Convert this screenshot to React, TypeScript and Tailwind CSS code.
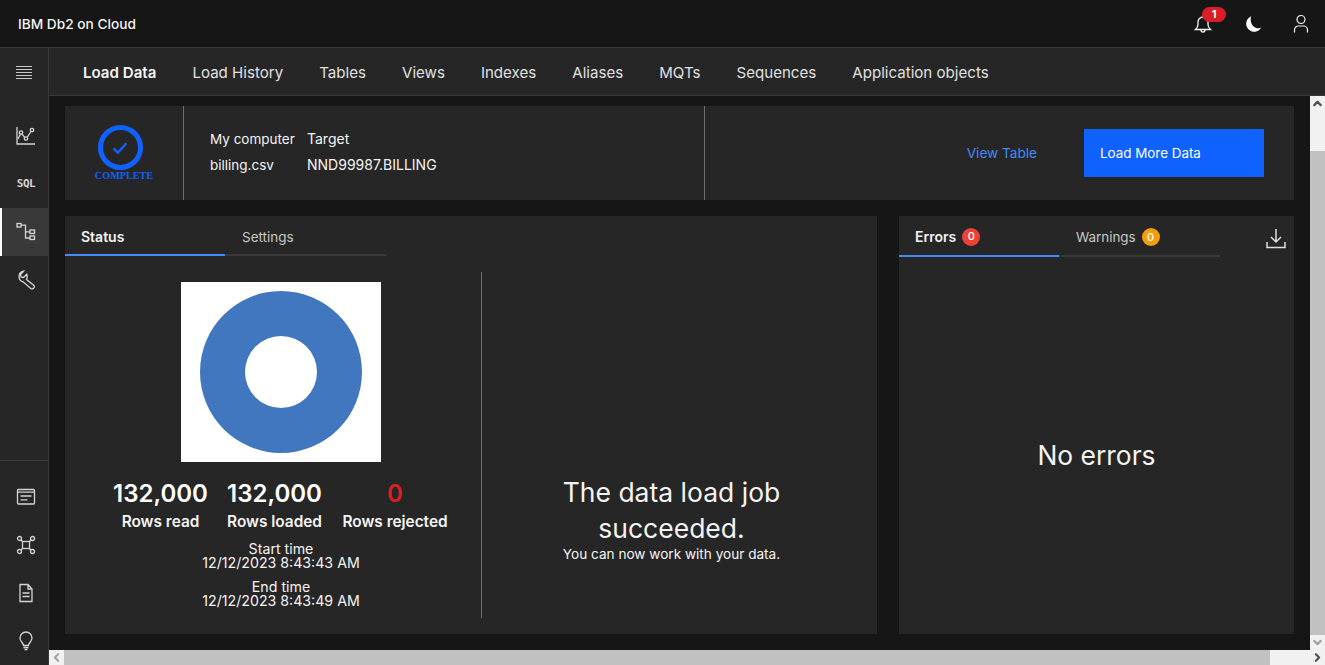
import React from 'react';
import { ChevronUp, ChevronDown, ChevronLeft, ChevronRight } from 'lucide-react';

const font = "font-['Inter','Liberation_Sans',sans-serif]";

const tabs = ['Load Data', 'Load History', 'Tables', 'Views', 'Indexes', 'Aliases', 'MQTs', 'Sequences', 'Application objects'];

const Svg = ({ children, w = 20 }: { children: React.ReactNode; w?: number }) => (
  <svg width={w} height={w} viewBox="0 0 20 20" fill="none" stroke="currentColor" strokeWidth="1.3">
    {children}
  </svg>
);

const ChartIcon = () => (
  <Svg>
    <path d="M1 1v17h18" />
    <path d="M2 13l3-6 5 6 6-9" />
    <circle cx="5" cy="6.5" r="1.7" fill="#262626" />
    <circle cx="10" cy="12.5" r="1.7" fill="#262626" />
    <circle cx="16" cy="4" r="1.7" fill="#262626" />
  </Svg>
);

const FlowIcon = () => (
  <Svg>
    <rect x="1" y="1.5" width="4" height="3.5" />
    <rect x="14" y="8" width="4.5" height="3.5" />
    <rect x="14" y="14" width="4.5" height="3.5" />
    <path d="M5 3.2H9.5V16H14M9.5 9.8H14" />
  </Svg>
);

const WrenchIcon = () => (
  <Svg>
    <path d="M7.5 1.2L4.5 4.5 5 7l2.500.5 3.300-3.300c.6 1.900.4 3.800-.3 5.300l7.500 6a2.300 2.300 0 0 1-3.300 3L7.500 12A5.500 5.500 0 0 1 7.500 1.200z" />
  </Svg>
);

const PanelIcon = () => (
  <Svg>
    <rect x="1.5" y="2.5" width="17" height="14.5" rx="1" />
    <path d="M1.5 5.2h17M4.5 9h11M4.5 12.8h7" />
  </Svg>
);

const NetworkIcon = () => (
  <Svg>
    <rect x="6.5" y="6.5" width="7" height="7" />
    <circle cx="3.5" cy="3.5" r="2" />
    <circle cx="16.5" cy="3.5" r="2" />
    <circle cx="3.5" cy="16.5" r="2" />
    <circle cx="16.5" cy="16.5" r="2" />
    <path d="M5 5l1.500 1.500M15 5l-1.500 1.500M5 15l1.500-1.500M15 15l-1.500-1.500" />
  </Svg>
);

const DocIcon = () => (
  <Svg>
    <path d="M4 1.5h8l4 4.500v12.500H4zM12 1.500V6h4M6.500 10h7M6.500 13.500h7" />
  </Svg>
);

const BulbIcon = () => (
  <Svg>
    <path d="M7.500 14.500c0-2.500-3.500-3.800-3.500-7.500a6 6 0 0 1 12 0c0 3.700-3.500 5-3.500 7.500z" />
    <path d="M7.500 16.500h5M8.500 18.500h3" />
  </Svg>
);

const SideButton = ({ children, active }: { children: React.ReactNode; active?: boolean }) => (
  <div className={`h-12 flex items-center justify-center text-[#d4d4d4] border-l-2 ${active ? 'bg-[#393939] border-white' : 'border-transparent'}`}>
    <div className="ml-0.5 flex items-center justify-center">{children}</div>
  </div>
);

const Stat = ({ value, label, red, width }: { value: string; label: string; red?: boolean; width: string }) => (
  <div className={`flex flex-col items-center shrink-0 ${width}`}>
    <div className={`text-[24px] leading-7 font-semibold whitespace-nowrap ${red ? 'text-[#da1e28]' : 'text-white'}`}>{value}</div>
    <div className="text-[15.4px] leading-5 font-semibold text-[#f4f4f4] mt-1 whitespace-nowrap">{label}</div>
  </div>
);

const Badge = ({ color, children }: { color: string; children: React.ReactNode }) => (
  <span className={`w-[18px] h-[18px] rounded-full text-white text-[11px] font-medium flex items-center justify-center ${color}`}>{children}</span>
);

export default function App() {
  return (
    <div className={`w-[1325px] h-[665px] overflow-hidden flex flex-col bg-[#161616] text-[#f4f4f4] ${font}`}>
      {/* Header */}
      <header className="h-[48px] shrink-0 bg-[#161616] border-b border-[#393939] flex items-center pl-[18px] relative">
        <span className="text-[13.7px] font-medium text-[#f4f4f4] mt-[1px]">IBM Db2 on Cloud</span>
        <div className="ml-auto flex items-center">
          <div className="relative w-5 h-5 mr-[30px] text-[#f4f4f4]">
            <svg width="20" height="20" viewBox="0 0 20 20" fill="none" stroke="currentColor" strokeWidth="1.3">
              <path d="M2.500 15.500c1.500-1.300 2.500-2.500 2.500-5V8a5 5 0 0 1 10 0v2.500c0 2.500 1 3.700 2.500 5zM8 16c0 2.700 4 2.700 4 0" />
            </svg>
            <span className="absolute -top-[7px] left-[9px] w-6 h-[15px] rounded-full bg-[#da1e28] text-white text-[11px] font-bold flex items-center justify-center">1</span>
          </div>
          <svg className="mr-[28px]" width="20" height="20" viewBox="0 0 20 20">
            <path fill="#fff" d="M8.200 2.300A8 8 0 1 0 18.200 13.600C13 16 5.700 10.800 8.200 2.300z" />
          </svg>
          <svg className="mr-[14px]" width="20" height="20" viewBox="0 0 20 20" fill="none" stroke="#f4f4f4" strokeWidth="1.2">
            <circle cx="10" cy="5.500" r="4" />
            <path d="M3.500 18.500v-2.500a4 4 0 0 1 4-4h5a4 4 0 0 1 4 4v2.500" />
          </svg>
        </div>
      </header>

      <div className="flex-1 flex min-h-0">
        {/* Sidebar */}
        <aside className="w-[49px] shrink-0 bg-[#262626] border-r border-[#393939] flex flex-col">
          <div className="h-[48px] flex items-center justify-center">
            <svg width="16" height="14" viewBox="0 0 16 14" stroke="#c6c6c6" strokeWidth="1">
              <path d="M0 1.500h16M0 4.500h16M0 7.500h16M0 10.500h16M0 13.500h16" />
            </svg>
          </div>
          <div className="mt-4 flex flex-col">
            <SideButton><ChartIcon /></SideButton>
            <SideButton>
              <span className="text-[11px] font-bold font-['DejaVu_Sans_Mono',monospace] tracking-[-0.5px] text-[#d4d4d4] mt-[1px]">SQL</span>
            </SideButton>
            <SideButton active><FlowIcon /></SideButton>
            <SideButton><WrenchIcon /></SideButton>
          </div>
          <div className="mt-auto border-t border-[#393939] pt-3 flex flex-col">
            <SideButton><PanelIcon /></SideButton>
            <SideButton><NetworkIcon /></SideButton>
            <SideButton><DocIcon /></SideButton>
            <SideButton><BulbIcon /></SideButton>
          </div>
        </aside>

        <div className="flex-1 flex flex-col min-w-0">
          {/* Sub navigation */}
          <nav className="h-[48px] shrink-0 bg-[#262626] border-b border-[#393939] flex items-center pl-[34px] pt-[3px] gap-[36px] text-[15.1px]">
            {tabs.map((t, i) => (
              <span key={t} className={i === 0 ? 'font-semibold text-[#f4f4f4]' : 'text-[#e0e0e0]'}>{t}</span>
            ))}
          </nav>

          <div className="flex-1 flex flex-col min-h-0">
            <div className="flex-1 flex min-h-0">
              {/* Scroll content */}
              <main className="flex-1 min-w-0 pl-4 pr-4 pt-[10px] pb-4 flex flex-col gap-4">
                <section className="h-[94px] shrink-0 bg-[#262626] flex items-stretch">
                  <div className="w-[119px] shrink-0 border-r border-[#6f6f6f] flex flex-col items-center pt-[19px]">
                    <div className="-ml-2 w-[45px] h-[45px] rounded-full border-[5px] border-[#0f62fe] flex items-center justify-center">
                      <svg width="16" height="12" viewBox="0 0 18 14" fill="none" stroke="#0f62fe" strokeWidth="2.8">
                        <path d="M1.500 7.500l5 5 10-11" />
                      </svg>
                    </div>
                    <span className="text-[10.2px] leading-none font-bold text-[#0f62fe] font-['Liberation_Serif',serif] mt-[1px]">COMPLETE</span>
                  </div>
                  <div className="w-[521px] shrink-0 border-r border-[#6f6f6f] pl-[26px] pt-[20px] text-[14px] leading-[26px] text-[#f4f4f4] grid grid-cols-[97px_1fr] content-start">
                    <span className="text-[13.5px]">My computer</span><span>Target</span>
                    <span className="text-[13.5px]">billing.csv</span><span>NND99987.BILLING</span>
                  </div>
                  <div className="flex-1 flex items-center justify-end pr-[30px]">
                    <span className="text-[13.6px] text-[#4589ff] mr-[47px]">View Table</span>
                    <div className="w-[180px] h-[48px] bg-[#0f62fe] text-white text-[13.4px] flex items-center pl-4">Load More Data</div>
                  </div>
                </section>

                <div className="flex-1 flex gap-[22px] min-h-0">
                  {/* Status panel */}
                  <section className="w-[812px] shrink-0 bg-[#262626] flex flex-col">
                    <div className="flex h-10 text-[14px]">
                      <div className="w-[160px] border-b-2 border-[#4589ff] pl-4 pt-[10px] font-semibold text-[#f4f4f4]">Status</div>
                      <div className="w-[161px] border-b-2 border-[#393939] pl-[17px] pt-[11px] text-[13.5px] text-[#c6c6c6]">Settings</div>
                    </div>
                    <div className="flex-1 flex pt-4 pb-4 min-h-0">
                      <div className="w-[417px] shrink-0 border-r border-[#6f6f6f] flex flex-col items-center pt-[10px] pl-4">
                        <div className="w-[200px] h-[180px] bg-white flex items-center justify-center">
                          <svg width="200" height="180" viewBox="0 0 200 180">
                            <path fillRule="evenodd" fill="#4177bf" d="M19 90a81 81 0 1 0 162 0a81 81 0 1 0-162 0zM64 90a36 36 0 1 0 72 0a36 36 0 1 0-72 0z" />
                          </svg>
                        </div>
                        <div className="flex justify-center mt-[18px]">
                          <Stat value="132,000" label="Rows read" width="w-[114px]" />
                          <Stat value="132,000" label="Rows loaded" width="w-[114px]" />
                          <Stat value="0" label="Rows rejected" red width="w-[127px]" />
                        </div>
                        <div className="text-[14.2px] leading-[14px] text-center mt-[10px] text-[#f4f4f4] whitespace-pre-line">
                          <div>{'Start time\n12/12/2023 8:43:43 AM'}</div>
                          <div className="mt-[10px]">{'End time\n12/12/2023 8:43:49 AM'}</div>
                        </div>
                      </div>
                      <div className="flex-1 flex flex-col items-center text-center pt-[202px] pr-4">
                        <div className="text-[26.5px] leading-[36px] w-[300px] text-[#f4f4f4]">The data load job succeeded.</div>
                        <div className="text-[13.6px] leading-[14px] text-[#f4f4f4] mt-[1px]">You can now work with your data.</div>
                      </div>
                    </div>
                  </section>

                  {/* Errors panel */}
                  <section className="flex-1 bg-[#262626] flex flex-col min-w-0">
                    <div className="flex h-[41px] text-[14px] relative">
                      <div className="w-[160px] border-b-2 border-[#4589ff] pl-4 pt-[2px] flex items-center gap-[6px] font-semibold">
                        <span>Errors</span><Badge color="bg-[#ea4335]">0</Badge>
                      </div>
                      <div className="w-[161px] border-b-2 border-[#393939] pl-[17px] pt-[3px] flex items-center gap-[6px] text-[#c6c6c6]">
                        <span className="text-[13.4px]">Warnings</span><Badge color="bg-[#f59e0b]">0</Badge>
                      </div>
                      <svg className="absolute right-[8px] top-[13px]" width="20" height="20" viewBox="0 0 20 20" fill="none" stroke="#e0e0e0" strokeWidth="1.5">
                        <path d="M10 0v13M5 8l5 5 5-5M1 13v5.500h18V13" />
                      </svg>
                    </div>
                    <div className="flex-1 flex justify-center pt-[180px] text-[26.4px] leading-9 text-[#f4f4f4]">No errors</div>
                  </section>
                </div>
              </main>

              {/* Vertical scrollbar */}
              <div className="w-[15px] shrink-0 bg-[#f1f1f1] flex flex-col">
                <div className="h-[15px] flex items-center justify-center"><ChevronUp size={13} strokeWidth={4} className="text-[#505050]" /></div>
                <div className="h-[40px]" />
                <div className="flex-1 bg-[#c1c1c1]" />
                <div className="h-[15px] flex items-center justify-center"><ChevronDown size={13} strokeWidth={4} className="text-[#a3a3a3]" /></div>
              </div>
            </div>

            {/* Horizontal scrollbar */}
            <div className="h-[15px] shrink-0 bg-[#f1f1f1] flex items-center">
              <div className="w-[15px] flex justify-center"><ChevronLeft size={13} strokeWidth={4} className="text-[#a3a3a3]" /></div>
              <div className="w-[1206px] h-full bg-[#c1c1c1]" />
              <div className="flex-1 flex justify-end pr-[1px]"><ChevronRight size={13} strokeWidth={4} className="text-[#505050]" /></div>
            </div>
          </div>
        </div>
      </div>
    </div>
  );
}
